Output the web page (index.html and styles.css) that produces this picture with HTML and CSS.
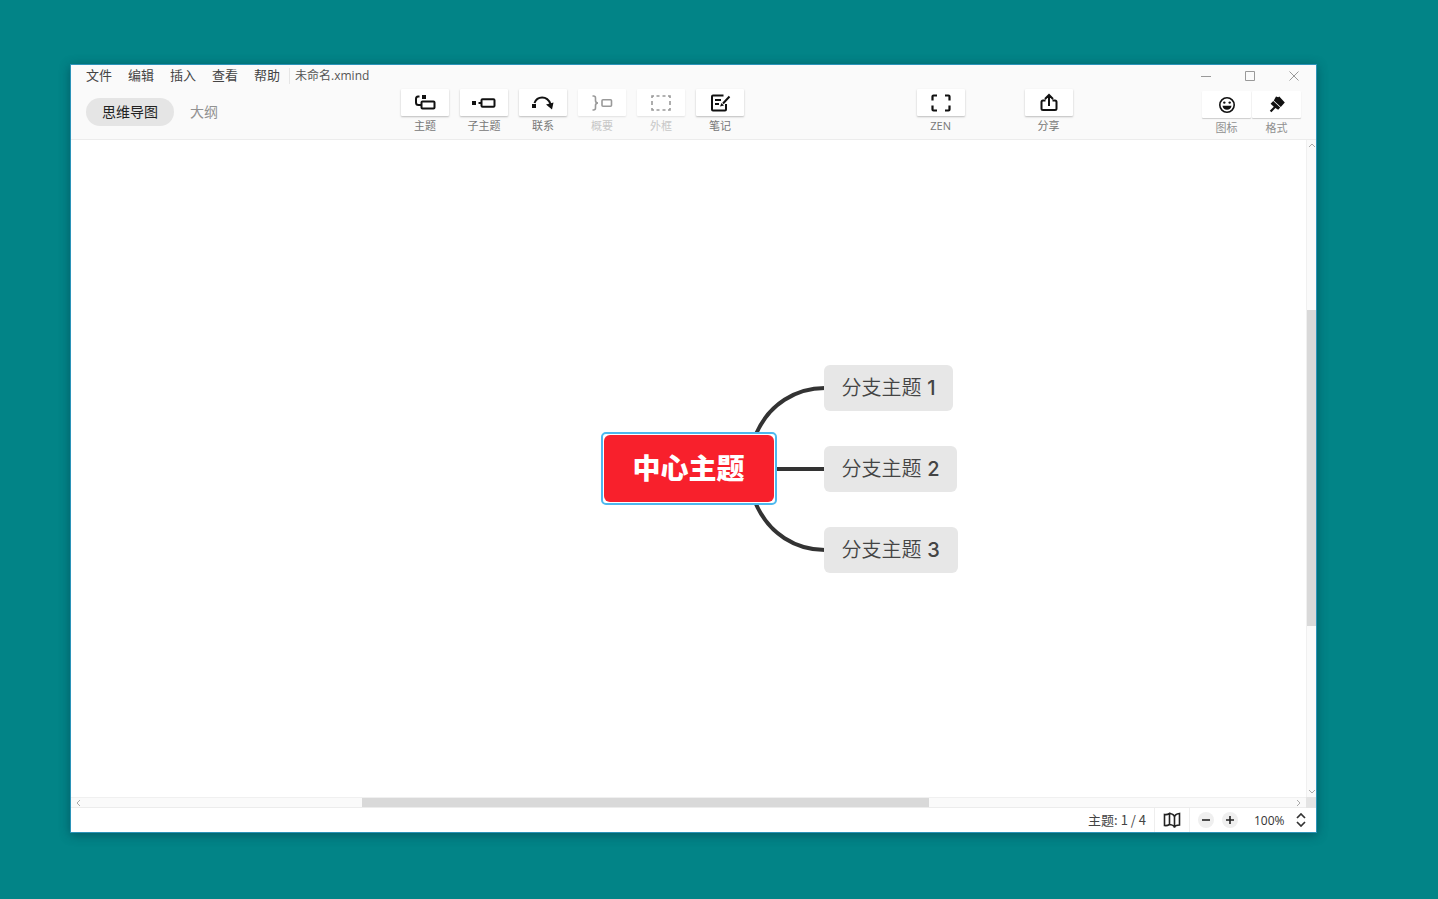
FILE: index.html
```html
<!DOCTYPE html>
<html lang="zh-CN">
<head>
<meta charset="utf-8">
<title>未命名.xmind</title>
<link rel="stylesheet" href="styles.css">
</head>
<body>
<main class="window">
  <header class="header">
    <div class="titlebar">
      <nav class="menu">
        <button type="button">文件</button>
        <button type="button">编辑</button>
        <button type="button">插入</button>
        <button type="button">查看</button>
        <button type="button">帮助</button>
      </nav>
      <span class="filename">未命名.xmind</span>
      <div class="controls">
        <button type="button" aria-label="最小化"><svg width="12" height="12" viewBox="0 0 12 12"><path d="M1 6.500h10"/></svg></button>
        <button type="button" aria-label="最大化"><svg width="12" height="12" viewBox="0 0 12 12"><path d="M1.500 1.500h9v9h-9z"/></svg></button>
        <button type="button" aria-label="关闭"><svg width="12" height="12" viewBox="0 0 12 12"><path d="M1.500 1.500l9 9M10.500 1.500l-9 9"/></svg></button>
      </div>
    </div>
    <div class="toolbar">
      <div class="tabs">
        <button type="button" class="tab tab-active">思维导图</button>
        <button type="button" class="tab">大纲</button>
      </div>
      <div class="tools">
        <button type="button" class="tool"><span class="face"><svg class="icon" width="24" height="20" viewBox="0 0 24 20"><path d="M6.500 3.500H5Q3 3.500 3 6v3.500Q3 12 5.500 12H8"/><rect x="8.500" y="8.500" width="13" height="7" rx="1"/><path class="solid" d="M9 2h4v4H9z"/></svg></span><span class="caption">主题</span></button>
        <button type="button" class="tool"><span class="face"><svg class="icon" width="24" height="20" viewBox="0 0 24 20"><path class="solid" d="M0 8h4v4H0z"/><path d="M6.500 10H10"/><rect x="9.500" y="6.300" width="13" height="7.400" rx="1"/></svg></span><span class="caption">子主题</span></button>
        <button type="button" class="tool"><span class="face"><svg class="icon" width="24" height="20" viewBox="0 0 24 20"><path d="M3.500 10C6 3 16 2 19.500 11"/><path class="solid" d="M1 11h4v4H1zM15 11.500l7.500-2-1.500 7z"/></svg></span><span class="caption">联系</span></button>
        <button type="button" class="tool" disabled><span class="face"><svg class="icon thin" width="24" height="20" viewBox="0 0 24 20"><path d="M2.500 3h1Q5.500 3 5.500 5v2.500Q5.500 10 8 10q-2.500 0-2.500 2.500V15q0 2-2 2h-1"/><rect x="12" y="6.700" width="9.500" height="6.600" rx="1"/></svg></span><span class="caption">概要</span></button>
        <button type="button" class="tool" disabled><span class="face"><svg class="icon thin" width="24" height="20" viewBox="0 0 24 20"><path d="M3 5V3h2M19 3h2v2M21 15v2h-2M5 17H3v-2M7.500 3h3M13.500 3h3M7.500 17h3M13.500 17h3M3 8v4M21 8v4"/></svg></span><span class="caption">外框</span></button>
        <button type="button" class="tool"><span class="face"><svg class="icon" width="24" height="20" viewBox="0 0 24 20"><path d="M15.500 2.500H5q-1 0-1 1v13q0 1 1 1h12q1 0 1-1V11M7 7h6M7 11h4M21.500 3.500L15 10.500"/><path class="solid" d="M13.500 10l2.500 2.500-4 1z"/></svg></span><span class="caption">笔记</span></button>
      </div>
      <span class="space-wide"></span>
      <button type="button" class="tool"><span class="face"><svg class="icon heavy" width="24" height="20" viewBox="0 0 24 20"><path d="M3.500 7.500v-4Q3.500 2.500 4.500 2.500H8M16 2.500h3.500q1 0 1 1v4M20.500 12.500v4q0 1-1 1H16M8 17.500H4.500q-1 0-1-1v-4"/></svg></span><span class="caption">ZEN</span></button>
      <button type="button" class="tool tool-share"><span class="face"><svg class="icon" width="24" height="20" viewBox="0 0 24 20"><path d="M8.500 7.500H6q-1.500 0-1.500 1.500v6.500Q4.500 17 6 17h12q1.500 0 1.500-1.500V9q0-1.500-1.500-1.500h-2.500M12 13V2.500M8 6l4-4 4 4"/></svg></span><span class="caption">分享</span></button>
      <span class="space-narrow"></span>
      <div class="panels">
        <button type="button" class="tool"><span class="face"><svg class="icon thin" width="20" height="20" viewBox="0 0 20 20"><circle cx="10" cy="10" r="7.200"/><circle class="solid" cx="7.300" cy="7.600" r="1.200"/><circle class="solid" cx="12.700" cy="7.600" r="1.200"/><path class="solid" d="M5.500 10.800h9q-.6 4-4.500 4t-4.500-4z"/></svg></span><span class="caption">图标</span></button>
        <button type="button" class="tool"><span class="face"><svg class="icon" width="20" height="20" viewBox="0 0 20 20"><path class="solid" d="M9 1.500l2.200.8L12.300 1.500l5.500 6-4 4.500L6.800 5.500z"/><path class="solid" d="M6.200 6.100l7 6.500-2 2.200-2.800-1.800-4 4.200-1.600-1.400 4-4L3.600 8.800z"/></svg></span><span class="caption">格式</span></button>
      </div>
    </div>
  </header>

  <section class="workspace">
    <div class="canvas">
      <div class="map">
        <svg class="links" width="136" height="170" viewBox="0 0 136 170"><path d="M67 50C80 20 107 4 136 4M67 85h69M67 120c13 30 40 46 69 46"/></svg>
        <div class="root"><div class="root-text">中心主题</div></div>
        <div class="branch branch-1">分支主题 <span class="digit">1</span></div>
        <div class="branch branch-2">分支主题 <span class="digit">2</span></div>
        <div class="branch branch-3">分支主题 <span class="digit">3</span></div>
      </div>
    </div>
    <div class="scroll scroll-y">
      <svg width="10" height="10" viewBox="0 0 10 10"><path d="M2 7l3-3 3 3"/></svg>
      <span style="flex-grow:160"></span><span class="thumb" style="flex-grow:316"></span><span style="flex-grow:161"></span>
      <svg width="10" height="10" viewBox="0 0 10 10"><path d="M2 3l3 3 3-3"/></svg>
    </div>
    <div class="scroll scroll-x">
      <svg width="14" height="10" viewBox="0 0 14 10"><path d="M9 2L6 5l3 3"/></svg>
      <span style="flex-grow:277"></span><span class="thumb" style="flex-grow:567"></span><span style="flex-grow:363"></span>
      <svg width="14" height="10" viewBox="0 0 14 10"><path d="M5 2l3 3-3 3"/></svg>
    </div>
    <div class="corner"></div>
  </section>

  <footer class="status">
    <span class="count">主题: 1 / 4</span>
    <button type="button" class="overview" aria-label="导航图"><svg width="18" height="18" viewBox="0 0 18 18"><path d="M1.500 3.500Q4 4 6.500 2.500v11Q4 15 1.500 14.500zM6.500 2.500Q11 3 11.500 6v10.500q-.5-2.500-5-3M11.500 6q.5-3 5-3.500v11.500q-4.500 0-5 2.500"/></svg></button>
    <div class="zoom">
      <button type="button" class="round" aria-label="缩小"><svg width="10" height="10" viewBox="0 0 10 10"><path d="M1 5h8"/></svg></button>
      <button type="button" class="round" aria-label="放大"><svg width="10" height="10" viewBox="0 0 10 10"><path d="M1 5h8M5 1v8"/></svg></button>
      <label class="level">
        <select aria-label="缩放比例"><option>100%</option></select>
        <svg width="10" height="14" viewBox="0 0 10 14"><path d="M1 5l4-4 4 4M1 9l4 4 4-4"/></svg>
      </label>
    </div>
  </footer>
</main>
</body>
</html>
```
FILE: styles.css
```css
* {
  box-sizing: border-box;
}

body {
  margin: 0;
  min-height: 100vh;
  padding: 64px 121px 66px 70px;
  display: flex;
  background: #028487;
  color: #444;
  font-family: "Open Sans", "Noto Sans CJK SC", sans-serif;
  font-size: 13px;
}

button {
  margin: 0;
  padding: 0;
  border: 0;
  background: none;
  color: inherit;
  font: inherit;
}

svg {
  display: block;
  flex: none;
  fill: none;
  stroke: currentColor;
}

.window {
  flex: 1;
  min-width: 0;
  display: flex;
  flex-direction: column;
  border: 1px solid #2b93b8;
  background: #fff;
  box-shadow: 0 2px 10px rgba(0, 40, 60, 0.45);
}

.header {
  background: #fafafa;
  border-bottom: 1px solid #ececec;
}

.titlebar {
  height: 22px;
  padding: 0 16px 0 15px;
  display: flex;
  align-items: center;
}

.menu {
  display: flex;
  gap: 16px;
  padding-bottom: 2px;
  line-height: 20px;
}

.filename {
  margin-left: 9px;
  padding-left: 5px;
  border-left: 1px solid #e6e6e6;
  font-size: 12px;
  line-height: 16px;
  color: #555;
}

.controls {
  margin-left: auto;
  display: flex;
  gap: 32px;
  color: #999;
}

.toolbar {
  height: 52px;
  padding: 2px 15px 0;
  display: flex;
  align-items: flex-start;
}

.tabs {
  width: 315px;
  padding-top: 9px;
  display: flex;
}

.tab {
  height: 28px;
  padding: 0 16px 2px;
  border-radius: 14px;
  font-size: 14px;
  color: #929292;
}

.tab-active {
  background: #e5e5e5;
  color: #222;
}

.tools {
  display: flex;
  gap: 11px;
}

.tool {
  width: 48px;
  display: flex;
  flex-direction: column;
  align-items: stretch;
  color: #111;
}

.face {
  height: 27px;
  display: flex;
  align-items: center;
  justify-content: center;
  border-radius: 1px;
  background: #fff;
  box-shadow: 0 1px 2px rgba(0, 0, 0, 0.25);
}

.caption {
  font-size: 11px;
  line-height: 20px;
  color: #777;
}

.tool:disabled {
  color: #999;
}

.tool:disabled .face {
  box-shadow: 0 1px 2px rgba(0, 0, 0, 0.1);
}

.tool:disabled .caption {
  color: #c8c8c8;
}

.tool-share {
  margin-left: 60px;
}

.icon {
  stroke-width: 2;
}

.thin {
  stroke-width: 1.6;
}

.heavy {
  stroke-width: 2.2;
}

.solid {
  fill: currentColor;
  stroke: none;
}

.space-wide {
  flex: 4;
}

.space-narrow {
  flex: 3;
}

.panels {
  padding-top: 2px;
  display: flex;
  gap: 1px;
}

.panels .tool {
  width: 49px;
}

.panels .face {
  box-shadow: 0 1px 1px rgba(0, 0, 0, 0.18);
}

.panels .caption {
  color: #909090;
}

.workspace {
  flex: 1;
  display: grid;
  grid-template: 1fr 11px / 1fr 10px;
}

.canvas {
  position: relative;
  overflow: hidden;
}

.map {
  position: absolute;
  left: 50%;
  top: 50%;
}

.links {
  position: absolute;
  left: 0;
  top: -85px;
  stroke: #333;
  stroke-width: 4;
}

.root {
  position: absolute;
  left: -88px;
  top: -37px;
  padding: 1px;
  border: 2px solid #4db8ee;
  border-radius: 5px;
  background: #fff;
}

.root-text {
  padding: 0 29px;
  border-radius: 6px;
  background: #f8202c;
  color: #fff;
  font-size: 28px;
  font-weight: 900;
  line-height: 67px;
  white-space: nowrap;
}

.branch {
  position: absolute;
  left: 135px;
  padding: 0 18px;
  border-radius: 6px;
  background: #e7e7e7;
  color: #444;
  font-family: Inter, "Noto Sans CJK SC", sans-serif;
  font-size: 20px;
  font-weight: 350;
  line-height: 46px;
  white-space: nowrap;
}

.digit {
  font-weight: 500;
}

.branch-1 {
  top: -104px;
}

.branch-2 {
  top: -23px;
}

.branch-3 {
  top: 58px;
}

.scroll {
  display: flex;
  background: #fafafa;
  color: #aaa;
}

.scroll-y {
  flex-direction: column;
  border-left: 1px solid #f0f0f0;
}

.scroll-x {
  border-top: 1px solid #f0f0f0;
  border-bottom: 1px solid #ececec;
}

.thumb {
  background: #d9d9d9;
}

.corner {
  background: #e4e4e4;
}

.status {
  height: 24px;
  padding-right: 10px;
  display: flex;
  align-items: stretch;
  justify-content: flex-end;
  line-height: 24px;
}

.count {
  padding-right: 8px;
  font-family: "Noto Sans CJK SC", sans-serif;
}

.overview {
  padding: 0 8px;
  border: 1px solid #eee;
  border-width: 0 1px;
  color: #222;
}

.overview svg {
  stroke-width: 1.6;
}

.zoom {
  padding-left: 8px;
  display: flex;
  align-items: center;
  gap: 8px;
}

.round {
  width: 16px;
  height: 16px;
  display: flex;
  align-items: center;
  justify-content: center;
  border-radius: 50%;
  background: #efefef;
  color: #222;
}

.round svg {
  stroke-width: 1.6;
}

.level {
  margin-left: 8px;
  display: flex;
  align-items: center;
  gap: 11px;
  color: #333;
}

.level svg {
  stroke-width: 1.7;
}

.level select {
  appearance: none;
  padding: 0;
  border: 0;
  background: none;
  color: inherit;
  font-family: "Open Sans", sans-serif;
  font-size: 12px;
}
```
